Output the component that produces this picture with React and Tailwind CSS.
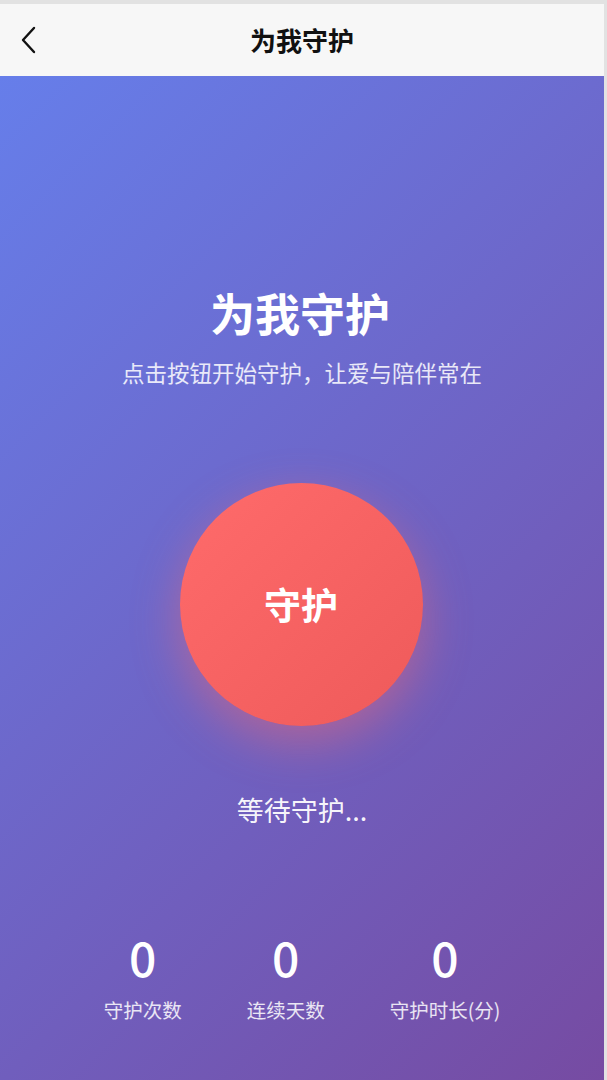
import React from 'react';

const stats = [
  { value: 0, label: '守护次数' },
  { value: 0, label: '连续天数' },
  { value: 0, label: '守护时长(分)' },
];

const font = { fontFamily: '"Noto Sans CJK SC", "Noto Sans", sans-serif' };

export default function App() {
  return (
    <div className="min-h-[1080px] bg-[#e2e2e2] pt-[4px] pr-[3px] flex flex-col" style={font}>
      <header className="relative h-[72px] bg-[#f7f7f7] flex items-center justify-center">
        <button className="absolute left-[14px] top-1/2 -translate-y-1/2 p-1 text-[#111]">
          <svg width="22" height="30" viewBox="0 0 22 30" fill="none" stroke="currentColor" strokeWidth="2.4" strokeLinecap="round" strokeLinejoin="round">
            <polyline points="16,3 5,15 16,27" />
          </svg>
        </button>
        <h1 className="text-[26px] font-bold text-[#111] leading-none">为我守护</h1>
      </header>

      <main className="flex-1 bg-[linear-gradient(135deg,#667eea_0%,#764ba2_100%)] flex flex-col items-center pt-[210px] text-white">
        <h2 className="-ml-[4px] text-[45px] font-bold leading-[54px]">为我守护</h2>
        <p className="mt-[15px] text-[22.5px] leading-[34px] text-white/85">点击按钮开始守护，让爱与陪伴常在</p>

        <button className="mt-[94px] -ml-[2px] w-[243px] h-[243px] rounded-full bg-[linear-gradient(135deg,#ff6b6b,#ee5a5a)] shadow-[0_16px_48px_rgba(255,107,107,0.45)] flex items-center justify-center">
          <span className="text-[37px] font-bold text-white leading-none">守护</span>
        </button>

        <p className="mt-[64px] text-[27px] leading-[39px] text-white/95">等待守护...</p>

        <div className="mt-[103px] flex justify-center gap-[65px]">
          {stats.map((s) => (
            <div key={s.label} className="flex flex-col items-center">
              <span className="text-[48px] font-medium leading-[48px]">{s.value}</span>
              <span className="mt-[15px] text-[19.5px] leading-[29px] text-white/85">{s.label}</span>
            </div>
          ))}
        </div>
      </main>
    </div>
  );
}
